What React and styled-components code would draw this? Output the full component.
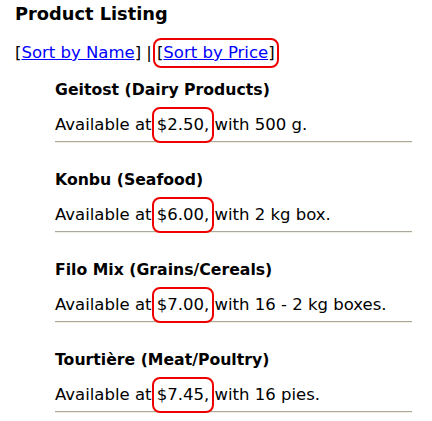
import React from "react";
import styled, { createGlobalStyle } from "styled-components";

const GlobalStyle = createGlobalStyle`
  body {
    margin: 0;
    background: #fff;
    font-family: "DejaVu Sans", Verdana, sans-serif;
    color: #000;
  }
`;

const products = [
  { name: "Geitost", category: "Dairy Products", price: "$2.50", unit: "500 g." },
  { name: "Konbu", category: "Seafood", price: "$6.00", unit: "2 kg box." },
  { name: "Filo Mix", category: "Grains/Cereals", price: "$7.00", unit: "16 - 2 kg boxes." },
  { name: "Tourtière", category: "Meat/Poultry", price: "$7.45", unit: "16 pies." },
];

const Page = styled.div`
  padding: 2px 20px 0 15px;
`;

const Title = styled.h3`
  margin: 0;
  font-size: 17.8px;
  font-weight: bold;
  line-height: 24px;
`;

const SortBar = styled.div`
  margin-top: 17px;
  font-size: 16.5px;
  line-height: 20px;
`;

const SortLink = styled.a`
  color: #0000ff;
  text-decoration: underline;
  cursor: pointer;
`;

const Marked = styled.span`
  padding: ${(p) => (p.$tall ? "6px 3px 7px" : "3px 2px 4px")};
  margin: ${(p) => (p.$tall ? "0 -3px" : "0 -2px 0 3px")};
  outline: 2px solid #ee0000;
  border-radius: 6px;
`;

const List = styled.div`
  margin-left: 40px;
  margin-top: 17px;
`;

const Item = styled.div`
  padding-bottom: 27px;
`;

const Name = styled.div`
  font-size: 15.7px;
  font-weight: bold;
  line-height: 20px;
`;

const Info = styled.div`
  margin-top: 15px;
  font-size: 16.5px;
  line-height: 20px;
`;

const Rule = styled.hr`
  margin: 6px 0 0;
  border: none;
  border-top: 1px solid #aca899;
  border-bottom: 1px solid #f1efe2;
  height: 0;
`;

export default function App() {
  return (
    <Page>
      <GlobalStyle />
      <Title>Product Listing</Title>
      <SortBar>
        [<SortLink>Sort by Name</SortLink>] |
        <Marked>
          [<SortLink>Sort by Price</SortLink>]
        </Marked>
      </SortBar>
      <List>
        {products.map((p) => (
          <Item key={p.name}>
            <Name>
              {p.name} ({p.category})
            </Name>
            <Info>
              Available at <Marked $tall>{p.price},</Marked> with {p.unit}
            </Info>
            <Rule />
          </Item>
        ))}
      </List>
    </Page>
  );
}
